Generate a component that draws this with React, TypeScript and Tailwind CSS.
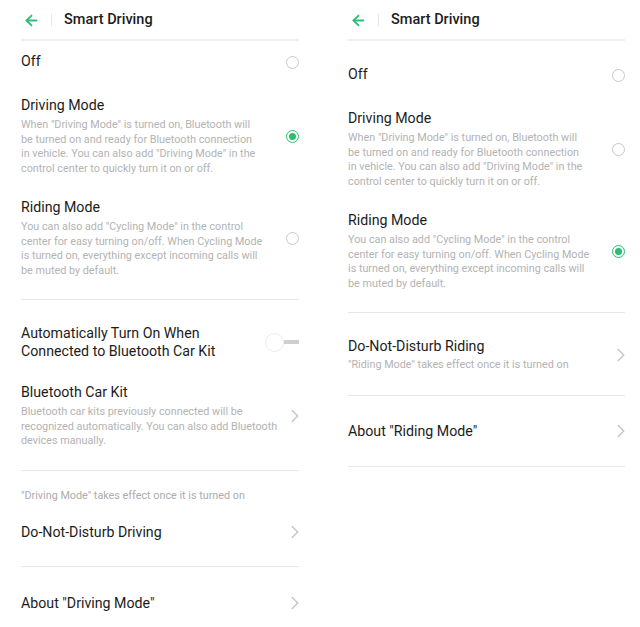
import { ArrowLeft, ChevronRight } from "lucide-react";

type Lines = string[];

function Header() {
  return (
    <div className="h-[41px] pt-[1px] flex items-center border-b-2 border-[#efefef]">
      <ArrowLeft className="ml-[2px] h-[17px] w-[17px] text-[#2dbf78]" strokeWidth={2.6} />
      <div className="ml-[11px] h-[12px] w-px bg-[#e6e6e6]" />
      <span className="ml-[12px] text-[14.5px] font-medium text-[#1c1c1c]">Smart Driving</span>
    </div>
  );
}

function Radio({ on }: { on?: boolean }) {
  if (on) {
    return (
      <div className="h-[13px] w-[13px] shrink-0 rounded-full border-[1.5px] border-[#27c06f] flex items-center justify-center">
        <div className="h-[7px] w-[7px] rounded-full bg-[#27c06f]" />
      </div>
    );
  }
  return <div className="h-[13px] w-[13px] shrink-0 rounded-full border border-[#c9c9c9]" />;
}

function Chevron() {
  return <ChevronRight className="h-[22px] w-[22px] -mr-[7px] shrink-0 text-[#c6c6c6]" strokeWidth={1.6} />;
}

function Desc({ lines }: { lines: Lines }) {
  return (
    <div className="mt-[4px] text-[10.8px] leading-[14.5px] text-[#b3b3b3]">
      {lines.map((l) => (
        <div key={l} className="whitespace-nowrap">
          {l}
        </div>
      ))}
    </div>
  );
}

function OptionRow({ title, lines, on, pb }: { title: string; lines: Lines; on?: boolean; pb: string }) {
  return (
    <div className={`pt-[13px] flex items-center justify-between ${pb}`}>
      <div>
        <div className="text-[14.2px] leading-[18px] text-[#1c1c1c]">{title}</div>
        <Desc lines={lines} />
      </div>
      <Radio on={on} />
    </div>
  );
}

const drivingDesc = [
  'When "Driving Mode" is turned on, Bluetooth will',
  "be turned on and ready for Bluetooth connection",
  'in vehicle. You can also add "Driving Mode" in the',
  "control center to quickly turn it on or off.",
];

const ridingDesc = [
  'You can also add "Cycling Mode" in the control',
  "center for easy turning on/off. When Cycling Mode",
  "is turned on, everything except incoming calls will",
  "be muted by default.",
];

function LeftScreen() {
  return (
    <div className="w-[320px] pl-[21px] pr-[21px]">
      <Header />
      <div className="h-[42px] flex items-center justify-between">
        <span className="text-[14.2px] text-[#1c1c1c]">Off</span>
        <Radio />
      </div>
      <OptionRow title="Driving Mode" lines={drivingDesc} on pb="pb-[9px]" />
      <OptionRow title="Riding Mode" lines={ridingDesc} pb="pb-[21px]" />
      <div className="h-px bg-[#e8e8e8]" />

      <div className="pt-[24px] flex items-center justify-between">
        <div className="text-[14.2px] leading-[18px] text-[#1c1c1c]">
          Automatically Turn On When
          <br />
          Connected to Bluetooth Car Kit
        </div>
        <div className="flex items-center">
          <div className="h-[19px] w-[19px] rounded-full border border-[#ececec] bg-white" />
          <div className="h-[4px] w-[15px] bg-[#cfcfcf]" />
        </div>
      </div>

      <div className="pt-[23px] pb-[21px] flex items-center justify-between">
        <div>
          <div className="text-[14.2px] leading-[18px] text-[#1c1c1c]">Bluetooth Car Kit</div>
          <Desc
            lines={[
              "Bluetooth car kits previously connected will be",
              "recognized automatically. You can also add Bluetooth",
              "devices manually.",
            ]}
          />
        </div>
        <Chevron />
      </div>
      <div className="h-px bg-[#e8e8e8]" />

      <div className="pt-[18px] text-[10.8px] leading-[14px] text-[#acacac]">
        "Driving Mode" takes effect once it is turned on
      </div>
      <div className="pt-[18px] pb-[23px] flex items-center justify-between">
        <span className="text-[14.2px] leading-[18px] text-[#1c1c1c]">Do-Not-Disturb Driving</span>
        <Chevron />
      </div>
      <div className="h-px bg-[#e8e8e8]" />
      <div className="pt-[25px] flex items-center justify-between">
        <span className="text-[14.2px] leading-[18px] text-[#1c1c1c]">About "Driving Mode"</span>
        <Chevron />
      </div>
    </div>
  );
}

function RightScreen() {
  return (
    <div className="w-[320px] pl-[28px] pr-[15px]">
      <Header />
      <div className="mt-[13px] h-[42px] flex items-center justify-between">
        <span className="text-[14.2px] text-[#1c1c1c]">Off</span>
        <Radio />
      </div>
      <OptionRow title="Driving Mode" lines={drivingDesc} pb="pb-[9px]" />
      <OptionRow title="Riding Mode" lines={ridingDesc} on pb="pb-[21px]" />
      <div className="h-px bg-[#e8e8e8]" />

      <div className="pt-[24px] pb-[23px] flex items-center justify-between">
        <div>
          <div className="text-[14.2px] leading-[18px] text-[#1c1c1c]">Do-Not-Disturb Riding</div>
          <div className="mt-[3px] text-[10.8px] leading-[14px] text-[#b3b3b3]">
            "Riding Mode" takes effect once it is turned on
          </div>
        </div>
        <Chevron />
      </div>
      <div className="h-px bg-[#e8e8e8]" />
      <div className="pt-[24px] pb-[24px] flex items-center justify-between">
        <span className="text-[14.2px] leading-[18px] text-[#1c1c1c]">About "Riding Mode"</span>
        <Chevron />
      </div>
      <div className="h-px bg-[#e8e8e8]" />
    </div>
  );
}

export default function App() {
  return (
    <div className="w-[640px] h-[627px] bg-white flex font-['Roboto',sans-serif] antialiased overflow-hidden">
      <LeftScreen />
      <RightScreen />
    </div>
  );
}
